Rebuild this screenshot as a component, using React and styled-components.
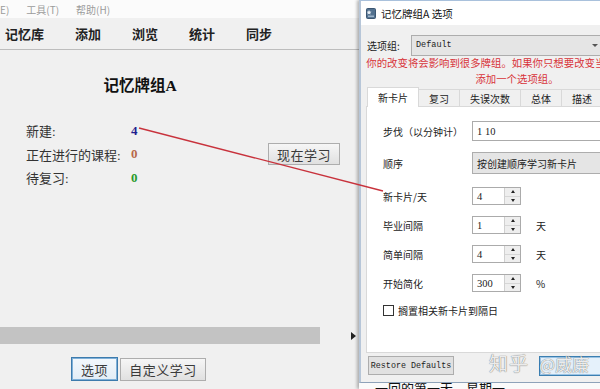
import React from 'react';
import styled, { createGlobalStyle } from 'styled-components';

const GlobalStyle = createGlobalStyle`
  html, body { margin: 0; padding: 0; }
  body { width: 600px; height: 389px; overflow: hidden; background: #f0f0f0; }
  * { box-sizing: border-box; }
`;

const SERIF = `"Liberation Serif", "Noto Sans CJK SC", serif`;
const SANS = `"Noto Sans CJK SC", "Liberation Sans", sans-serif`;
const MONO = `"Liberation Mono", monospace`;

const App = () => (
  <Page>
    <GlobalStyle />
    <MainWindow>
      <MenuBar>
        <span>E)</span>
        <span>工具(T)</span>
        <span>帮助(H)</span>
      </MenuBar>
      <Toolbar>
        <ToolItem>记忆库</ToolItem>
        <ToolItem>添加</ToolItem>
        <ToolItem>浏览</ToolItem>
        <ToolItem>统计</ToolItem>
        <ToolItem>同步</ToolItem>
      </Toolbar>
      <DeckTitle>记忆牌组A</DeckTitle>
      <StatsBlock>
        <StatTable>
          <StatLabel>新建:</StatLabel>
          <StatValue $color="#1f1f8f">4</StatValue>
          <StatLabel>正在进行的课程:</StatLabel>
          <StatValue $color="#b8684a">0</StatValue>
          <StatLabel>待复习:</StatLabel>
          <StatValue $color="#2a9a2a">0</StatValue>
        </StatTable>
        <MainButton $w={72} $h={22}>现在学习</MainButton>
      </StatsBlock>
      <Footer>
        <ProgressRow>
          <ProgressBar />
          <Arrow />
        </ProgressRow>
        <BottomButtons>
          <MainButton $w={47} $h={24} $focused>选项</MainButton>
          <MainButton $w={86} $h={23}>自定义学习</MainButton>
        </BottomButtons>
      </Footer>
    </MainWindow>

    <DialogColumn>
      <Dialog>
        <TitleBar>
          <svg width="10" height="11" viewBox="0 0 10 11">
            <rect x="0.5" y="0.5" width="9" height="10" rx="1" fill="#52718f" stroke="#3b5672" />
            <path d="M3 2 L3.8 3.6 L5.5 3.8 L4.2 4.9 L4.6 6.6 L3 5.7 L1.4 6.6 L1.8 4.9 L0.8 3.8 L2.3 3.6 Z" fill="#e8eef5" />
            <rect x="2" y="7.5" width="6" height="1.6" fill="#9fb6cc" />
          </svg>
          <span>记忆牌组A 选项</span>
        </TitleBar>
        <DialogBody>
          <GroupRow>
            <GroupLabel>选项组:</GroupLabel>
            <GroupSelect>
              <span>Default</span>
              <SelectArrow />
            </GroupSelect>
          </GroupRow>
          <Warning>
            你的改变将会影响到很多牌组。如果你只想要改变当前牌组，请先
            <br />
            添加一个选项组。
          </Warning>
          <TabBar>
            <Tab $active>新卡片</Tab>
            <Tab>复习</Tab>
            <Tab>失误次数</Tab>
            <Tab>总体</Tab>
            <Tab>描述</Tab>
            <Tab>更多</Tab>
          </TabBar>
          <TabPanel>
            <FieldRow $gap={13}>
              <FieldLabel>步伐（以分钟计）</FieldLabel>
              <TextInput>1 10</TextInput>
            </FieldRow>
            <FieldRow $gap={10}>
              <FieldLabel>顺序</FieldLabel>
              <ComboBox>按创建顺序学习新卡片</ComboBox>
            </FieldRow>
            <FieldRow $gap={11}>
              <FieldLabel>新卡片/天</FieldLabel>
              <SpinBox value="4" />
            </FieldRow>
            <FieldRow $gap={7}>
              <FieldLabel>毕业间隔</FieldLabel>
              <SpinBox value="1" />
              <Unit>天</Unit>
            </FieldRow>
            <FieldRow $gap={7}>
              <FieldLabel>简单间隔</FieldLabel>
              <SpinBox value="4" />
              <Unit>天</Unit>
            </FieldRow>
            <FieldRow $gap={7}>
              <FieldLabel>开始简化</FieldLabel>
              <SpinBox value="300" />
              <Unit>%</Unit>
            </FieldRow>
            <FieldRow $gap={5}>
              <CheckBox />
              <span>搁置相关新卡片到隔日</span>
            </FieldRow>
          </TabPanel>
          <DialogFooter>
            <RestoreButton>Restore Defaults</RestoreButton>
            <DefaultButton />
          </DialogFooter>
        </DialogBody>
      </Dialog>
      <BelowStrip>一回的第一天，星期一</BelowStrip>
    </DialogColumn>

    <Annotation width="600" height="389" viewBox="0 0 600 389">
      <line x1="139" y1="128" x2="383" y2="191" stroke="#c8323c" strokeWidth="1.3" />
    </Annotation>
    <Watermark>
      <span>知乎</span>
      <small>@威廉</small>
    </Watermark>
  </Page>
);

const SpinBox = ({ value }) => (
  <SpinFrame>
    <SpinValue>{value}</SpinValue>
    <SpinButtons>
      <SpinHalf><Tri $up /></SpinHalf>
      <SpinHalf><Tri /></SpinHalf>
    </SpinButtons>
  </SpinFrame>
);

export default App;

const Page = styled.div`
  position: relative;
  display: flex;
  width: 600px;
  height: 389px;
  overflow: hidden;
  background: #f0f0f0;
`;

const MainWindow = styled.div`
  flex: none;
  width: 359px;
  height: 389px;
  display: flex;
  flex-direction: column;
  font-family: ${SERIF};
  color: #333;
`;

const MenuBar = styled.div`
  height: 18px;
  display: flex;
  align-items: center;
  gap: 17px;
  background: #fbfbfb;
  font-family: ${SANS};
  font-size: 10px;
  color: #9c9c9c;
`;

const Toolbar = styled.div`
  height: 32px;
  display: flex;
  align-items: center;
  gap: 31px;
  padding-left: 5px;
  background: #f0f0f0;
  border-bottom: 1px solid #bdbdbd;
`;

const ToolItem = styled.span`
  font-size: 13px;
  font-weight: bold;
  color: #222;
`;

const DeckTitle = styled.div`
  width: 280px;
  margin-top: 28px;
  text-align: center;
  font-size: 15.5px;
  line-height: 16px;
  font-weight: bold;
  color: #111;
`;

const StatsBlock = styled.div`
  display: flex;
  align-items: center;
  margin-top: 25px;
`;

const StatTable = styled.div`
  width: 268px;
  padding-left: 26px;
  display: grid;
  grid-template-columns: 105px auto;
  grid-auto-rows: 23.5px;
  align-items: center;
  font-size: 13px;
`;

const StatLabel = styled.span`
  color: #333;
`;

const StatValue = styled.span`
  color: ${p => p.$color};
  font-weight: bold;
`;

const MainButton = styled.div`
  width: ${p => p.$w}px;
  height: ${p => p.$h}px;
  display: flex;
  align-items: center;
  justify-content: center;
  font-size: 13px;
  letter-spacing: 0.5px;
  color: #3a3a3a;
  border: 1px solid ${p => (p.$focused ? '#3d7bad' : '#adadad')};
  box-shadow: ${p => (p.$focused ? 'inset 0 0 0 1px #7fb0d8' : 'none')};
  background: ${p => (p.$focused
    ? 'linear-gradient(#f3f8fc, #e2edf6)'
    : 'linear-gradient(#f6f6f6, #e0e0e0)')};
`;

const Footer = styled.div`
  margin-top: auto;
  padding-bottom: 8px;
  display: flex;
  flex-direction: column;
`;

const ProgressRow = styled.div`
  height: 17px;
  display: flex;
  align-items: center;
`;

const ProgressBar = styled.div`
  width: 320px;
  height: 17px;
  background: #c3c3c3;
`;

const Arrow = styled.div`
  margin-left: 31px;
  width: 0;
  height: 0;
  border-left: 5px solid #222;
  border-top: 4px solid transparent;
  border-bottom: 4px solid transparent;
`;

const BottomButtons = styled.div`
  display: flex;
  align-items: center;
  gap: 2px;
  margin-top: 13px;
  padding-left: 71px;
`;

const DialogColumn = styled.div`
  flex: none;
  width: 312px;
  display: flex;
  flex-direction: column;
  box-shadow: -2px 0 3px rgba(0, 0, 0, 0.28);
  z-index: 1;
`;

const Dialog = styled.div`
  height: 383px;
  display: flex;
  flex-direction: column;
  border-left: 2px solid #b7c6d8;
  border-top: 1px solid #a9c1dc;
  border-bottom: 1px solid #8ea2b9;
  background: #f0f0f0;
  font-family: ${SANS};
  font-size: 10px;
  color: #222;
`;

const TitleBar = styled.div`
  height: 24px;
  flex: none;
  display: flex;
  align-items: center;
  gap: 5px;
  padding-left: 5px;
  background: #ffffff;
  font-size: 10.5px;
  color: #111;
`;

const DialogBody = styled.div`
  flex: 1;
  display: flex;
  flex-direction: column;
  padding: 0 3px 0 5px;
`;

const GroupRow = styled.div`
  height: 22px;
  margin-top: 9px;
  display: flex;
  align-items: center;
`;

const GroupLabel = styled.span`
  width: 45px;
  padding-left: 1px;
`;

const GroupSelect = styled.div`
  position: relative;
  width: 196px;
  height: 21px;
  display: flex;
  align-items: center;
  padding-left: 4px;
  background: #e5e5e5;
  border: 1px solid #adadad;
  font-family: ${MONO};
  font-size: 8.5px;
  color: #222;
`;

const SelectArrow = styled.div`
  margin-left: auto;
  margin-right: 8px;
  width: 0;
  height: 0;
  border-top: 3px solid #555;
  border-left: 3px solid transparent;
  border-right: 3px solid transparent;
`;

const Warning = styled.div`
  margin-top: -1px;
  text-align: center;
  white-space: nowrap;
  font-size: 10.4px;
  line-height: 16px;
  color: #d8343a;
`;

const TabBar = styled.div`
  height: 19px;
  display: flex;
  align-items: flex-end;
  padding-left: 1px;
`;

const Tab = styled.div`
  height: ${p => (p.$active ? 20 : 17)}px;
  margin-bottom: ${p => (p.$active ? -1 : 0)}px;
  margin-left: ${p => (p.$active ? 0 : -1)}px;
  display: flex;
  align-items: center;
  padding: 0 10px;
  border: 1px solid #d9d9d9;
  border-bottom: none;
  background: ${p => (p.$active ? '#ffffff' : '#f0f0f0')};
  position: relative;
  z-index: ${p => (p.$active ? 2 : 1)};
  white-space: nowrap;
`;

const TabPanel = styled.div`
  height: 247px;
  display: flex;
  flex-direction: column;
  padding-left: 16px;
  background: #ffffff;
  border: 1px solid #d9d9d9;
`;

const FieldRow = styled.div`
  height: 22px;
  flex: none;
  margin-top: ${p => p.$gap}px;
  display: flex;
  align-items: center;
  white-space: nowrap;
`;

const FieldLabel = styled.span`
  width: 89px;
  flex: none;
`;

const TextInput = styled.div`
  width: 200px;
  height: 20px;
  display: flex;
  align-items: center;
  padding-left: 4px;
  border: 1px solid #ababab;
  background: #ffffff;
  font-family: ${SERIF};
  font-size: 10.5px;
`;

const ComboBox = styled.div`
  width: 200px;
  height: 22px;
  display: flex;
  align-items: center;
  padding-left: 4px;
  border: 1px solid #adadad;
  background: #e5e5e5;
`;

const SpinFrame = styled.div`
  width: 49px;
  height: 18px;
  display: flex;
  border: 1px solid #ababab;
  background: #ffffff;
`;

const SpinValue = styled.span`
  flex: 1;
  display: flex;
  align-items: center;
  padding-left: 4px;
  font-family: ${SERIF};
  font-size: 10.5px;
`;

const SpinButtons = styled.div`
  width: 16px;
  display: flex;
  flex-direction: column;
  border-left: 1px solid #d0d0d0;
`;

const SpinHalf = styled.div`
  flex: 1;
  display: flex;
  align-items: center;
  justify-content: center;
  background: #eeeeee;
  & + & { border-top: 1px solid #d6d6d6; }
`;

const Tri = styled.div`
  width: 0;
  height: 0;
  border-left: 2.5px solid transparent;
  border-right: 2.5px solid transparent;
  ${p => (p.$up ? 'border-bottom: 3px solid #222;' : 'border-top: 3px solid #222;')}
`;

const Unit = styled.span`
  margin-left: 15px;
`;

const CheckBox = styled.div`
  width: 11px;
  height: 11px;
  margin-right: 4px;
  border: 1px solid #333;
  background: #ffffff;
`;

const DialogFooter = styled.div`
  display: flex;
  align-items: flex-start;
  padding: 3px 0 0 2px;
`;

const RestoreButton = styled.div`
  width: 86px;
  height: 19px;
  display: flex;
  align-items: center;
  justify-content: center;
  border: 1px solid #adadad;
  background: #e1e1e1;
  font-family: ${MONO};
  font-size: 8.4px;
  color: #222;
`;

const DefaultButton = styled.div`
  width: 80px;
  height: 20px;
  margin-left: 85px;
  border: 1px solid #3c7fb1;
  box-shadow: inset 0 0 0 1px #9cc4e4;
  background: #e5f1fb;
`;

const BelowStrip = styled.div`
  flex: 1;
  overflow: hidden;
  padding-left: 16px;
  background: #fafafa;
  font-family: ${SERIF};
  font-size: 13px;
  line-height: 12px;
  color: #111;
  white-space: nowrap;
`;

const Annotation = styled.svg`
  position: absolute;
  left: 0;
  top: 0;
  pointer-events: none;
  z-index: 5;
`;

const Watermark = styled.div`
  position: absolute;
  left: 489px;
  top: 349px;
  display: flex;
  align-items: baseline;
  gap: 10px;
  z-index: 6;
  font-family: ${SANS};
  color: rgba(255, 255, 255, 0.9);
  text-shadow: 0 0 1px rgba(0, 0, 0, 0.5), 0 0 1px rgba(0, 0, 0, 0.3);
  span { font-size: 19px; letter-spacing: 1px; }
  small { font-size: 17px; }
`;
